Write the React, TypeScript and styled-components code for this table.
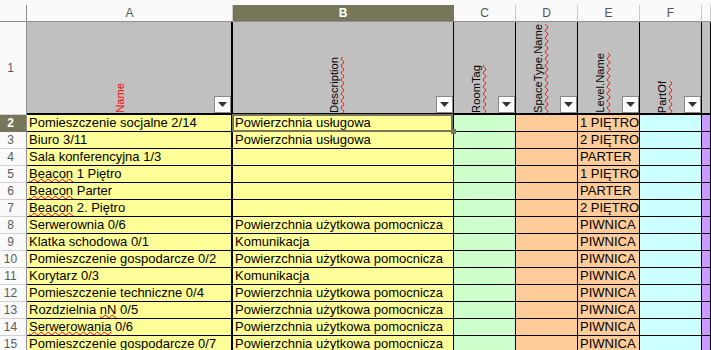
import React from 'react'
import styled, { createGlobalStyle } from 'styled-components'

const OLIVE = '#77765a'

const GlobalStyle = createGlobalStyle`
  html, body {
    margin: 0;
    padding: 0;
    background: #fafafa;
  }
  body {
    font-family: 'Liberation Sans', Arial, sans-serif;
    overflow: hidden;
  }
`

const Sheet = styled.div`
  display: grid;
  grid-template-columns: 27px 206px 221px 62px 62px 62px 62px 1fr;
  grid-template-rows: 17px 93px repeat(14, 17px);
  width: 711px;
  height: 350px;
  padding-top: 5px;
  box-sizing: border-box;
  overflow: hidden;
  background: #fafafa;
`

const Corner = styled.div`
  border-right: 1px solid #8f8f8f;
  border-bottom: 1px solid #8f8f8f;
`

const ColHeader = styled.div<{ $active?: boolean }>`
  display: flex;
  align-items: center;
  justify-content: center;
  box-sizing: border-box;
  background: ${({ $active }) => ($active ? OLIVE : '#fafafa')};
  color: ${({ $active }) => ($active ? '#ffffff' : '#555555')};
  font-weight: ${({ $active }) => ($active ? 700 : 400)};
  font-size: 12px;
  border-right: 1px solid ${({ $active }) => ($active ? OLIVE : '#cdcdcd')};
  border-bottom: 1px solid #8f8f8f;
`

const RowHeader = styled.div<{ $active?: boolean }>`
  display: flex;
  align-items: center;
  justify-content: center;
  box-sizing: border-box;
  padding-right: 5px;
  background: ${({ $active }) => ($active ? OLIVE : '#fafafa')};
  color: ${({ $active }) => ($active ? '#ffffff' : '#5a5a5a')};
  font-weight: ${({ $active }) => ($active ? 700 : 400)};
  font-size: 12px;
  border-right: 1px solid #8f8f8f;
  border-bottom: 1px solid ${({ $active }) => ($active ? OLIVE : '#d2d2d2')};
`

const TitleCell = styled.div<{ $thick?: boolean }>`
  display: flex;
  align-items: flex-end;
  box-sizing: border-box;
  background: #c0c0c0;
  border-right: ${({ $thick }) => ($thick ? 2 : 1)}px solid #000;
  border-bottom: 2px solid #000;
  min-width: 0;
`

const LabelSlot = styled.div`
  flex: 1;
  display: flex;
  justify-content: center;
  align-items: flex-end;
  align-self: stretch;
  min-width: 0;
`

const Label = styled.span<{ $red?: boolean; $check?: boolean }>`
  writing-mode: vertical-rl;
  transform: rotate(180deg);
  font-family: 'Liberation Sans', Arial, sans-serif;
  font-size: 11.2px;
  line-height: 13px;
  white-space: nowrap;
  color: ${({ $red }) => ($red ? '#ff0000' : '#000000')};
  text-decoration: ${({ $check }) => ($check ? 'underline wavy #ff0000' : 'none')};
  text-decoration-thickness: 1px;
  text-underline-position: left;
`

const FilterButton = styled.div`
  flex-shrink: 0;
  width: 17px;
  height: 17px;
  box-sizing: border-box;
  border: 1px solid #8a8a8a;
  background: #ffffff;
  display: flex;
  align-items: center;
  justify-content: center;
`

const Cell = styled.div<{ $fill: string; $thick?: boolean; $selected?: boolean }>`
  position: relative;
  box-sizing: border-box;
  background: ${({ $fill }) => $fill};
  border-right: ${({ $thick }) => ($thick ? 2 : 1)}px solid #000;
  border-bottom: 1px solid #000;
  padding-left: 2px;
  font-size: 13px;
  line-height: 16px;
  color: #000;
  white-space: nowrap;
  overflow: ${({ $selected }) => ($selected ? 'visible' : 'hidden')};
  min-width: 0;

  ${({ $selected }) =>
    $selected &&
    `
    &::after {
      content: '';
      position: absolute;
      top: -1px;
      left: -1px;
      right: 0;
      bottom: -1px;
      border: 2px solid ${OLIVE};
      pointer-events: none;
    }
    &::before {
      content: '';
      position: absolute;
      right: -3px;
      bottom: -3px;
      width: 5px;
      height: 5px;
      background: ${OLIVE};
      z-index: 1;
    }
  `}
`

const Misspelled = styled.span`
  text-decoration: underline wavy #ff0000;
  text-decoration-thickness: 1px;
  text-underline-offset: 0;
`

const columns = [
  { key: 'A', label: 'Name', fill: '#ffff99', red: true, check: false, thick: true },
  { key: 'B', label: 'Description', fill: '#ffff99', red: false, check: true, thick: false },
  { key: 'C', label: 'RoomTag', fill: '#ccffcc', red: false, check: true, thick: false },
  { key: 'D', label: 'SpaceType.Name', fill: '#ffcc99', red: false, check: true, thick: false },
  { key: 'E', label: 'Level.Name', fill: '#ffcc99', red: false, check: true, thick: false },
  { key: 'F', label: 'PartOf', fill: '#ccffff', red: false, check: true, thick: false },
  { key: 'G', label: '', fill: '#cc99ff', red: false, check: false, thick: false },
]

const UZYTKOWA = 'Powierzchnia użytkowa pomocnicza'

// ~word~ marks a word the spell checker flagged
const rows: [string, string, string][] = [
  ['Pomieszczenie socjalne 2/14', 'Powierzchnia usługowa', '1 PIĘTRO'],
  ['Biuro 3/11', 'Powierzchnia usługowa', '2 PIĘTRO'],
  ['Sala konferencyjna 1/3', '', 'PARTER'],
  ['~Beacon~ 1 Piętro', '', '1 PIĘTRO'],
  ['~Beacon~ Parter', '', 'PARTER'],
  ['~Beacon~ 2. Piętro', '', '2 PIĘTRO'],
  ['Serwerownia 0/6', UZYTKOWA, 'PIWNICA'],
  ['Klatka schodowa 0/1', 'Komunikacja', 'PIWNICA'],
  ['Pomieszczenie gospodarcze 0/2', UZYTKOWA, 'PIWNICA'],
  ['Korytarz 0/3', 'Komunikacja', 'PIWNICA'],
  ['Pomieszczenie techniczne 0/4', UZYTKOWA, 'PIWNICA'],
  ['Rozdzielnia ~nN~ 0/5', UZYTKOWA, 'PIWNICA'],
  ['~Serwerowania~ 0/6', UZYTKOWA, 'PIWNICA'],
  ['Pomieszczenie gospodarcze 0/7', UZYTKOWA, 'PIWNICA'],
]

const renderText = (text: string) =>
  text.split('~').map((part, i) => (i % 2 === 1 ? <Misspelled key={i}>{part}</Misspelled> : part))

const FilterArrow = () => (
  <svg width="9" height="5" viewBox="0 0 9 5">
    <polygon points="0,0 9,0 4.5,5" fill="#333" />
  </svg>
)

export default function App() {
  return (
    <>
      <GlobalStyle />
      <Sheet>
        <Corner />
        {columns.map(c => (
          <ColHeader key={c.key} $active={c.key === 'B'}>
            {c.key === 'G' ? '' : c.key}
          </ColHeader>
        ))}

        <RowHeader>1</RowHeader>
        {columns.map(c => (
          <TitleCell key={c.key} $thick={c.thick}>
            {c.label && (
              <>
                <LabelSlot>
                  <Label $red={c.red} $check={c.check}>
                    {c.label}
                  </Label>
                </LabelSlot>
                <FilterButton>
                  <FilterArrow />
                </FilterButton>
              </>
            )}
          </TitleCell>
        ))}

        {rows.map(([name, desc, level], i) => {
          const values = [renderText(name), desc, '', '', level, '', '']
          return (
            <React.Fragment key={i}>
              <RowHeader $active={i === 0}>{i + 2}</RowHeader>
              {columns.map((c, j) => (
                <Cell key={c.key} $fill={c.fill} $thick={c.thick} $selected={i === 0 && c.key === 'B'}>
                  {values[j]}
                </Cell>
              ))}
            </React.Fragment>
          )
        })}
      </Sheet>
    </>
  )
}
